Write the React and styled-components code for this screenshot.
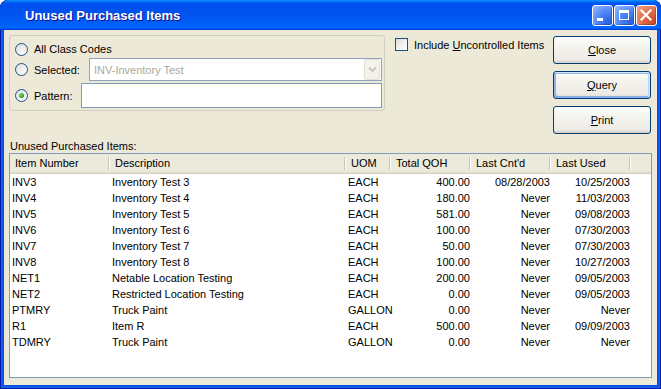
import React from "react";
import styled, { createGlobalStyle, css } from "styled-components";

const GlobalStyle = createGlobalStyle`
  html, body {
    margin: 0;
    padding: 0;
    background: #ffffff;
  }
  body {
    font-family: "Liberation Sans", Arial, sans-serif;
    font-size: 11px;
    color: #000000;
  }
`;

const Window = styled.div`
  width: 661px;
  height: 389px;
  box-sizing: border-box;
  display: flex;
  flex-direction: column;
  padding: 0 4px 4px;
  background: #0a53e4;
  border-radius: 8px 8px 0 0;
  overflow: hidden;
  box-shadow: inset 1px 0 #0019a8, inset -1px 0 #0019a8, inset 0 -1px #0019a8,
    inset 2px 0 #1664f0, inset -2px 0 #1664f0, inset 0 -2px #1664f0;
`;

const TitleBar = styled.div`
  height: 30px;
  margin: 0 -4px;
  padding: 0 4px 0 25px;
  display: flex;
  align-items: center;
  background: linear-gradient(
    180deg,
    #0997ff 0%,
    #0053ee 10%,
    #0050ee 40%,
    #0062fa 86%,
    #0066ff 92%,
    #005bff 95%,
    #003dd7 97%,
    #003dd7 100%
  );
  border-radius: 8px 8px 0 0;
`;

const Title = styled.div`
  flex: 1;
  color: #ffffff;
  font-size: 13px;
  font-weight: bold;
  text-shadow: 1px 1px #0f1089;
`;

const CaptionButtons = styled.div`
  display: flex;
  gap: 1px;
  margin-top: 1px;
`;

const CaptionButton = styled.div`
  width: 21px;
  height: 21px;
  box-sizing: border-box;
  border: 1px solid #ffffff;
  border-radius: 3px;
  display: flex;
  align-items: center;
  justify-content: center;
  background: ${(p) =>
    p.close
      ? "radial-gradient(circle at 85% 85%, #cc4628 0%, #e06a46 45%, #f0a48a 100%)"
      : "radial-gradient(circle at 85% 85%, #2a5fdf 0%, #4b82f7 45%, #9bbcff 100%)"};
  box-shadow: inset -1px -1px rgba(0, 0, 60, 0.25);
`;

const Body = styled.div`
  flex: 1;
  display: flex;
  flex-direction: column;
  padding: 5px 5px 7px 5px;
  background: #ece9d8;
`;

const TopRow = styled.div`
  height: 99px;
  display: flex;
  align-items: flex-start;
`;

const GroupBox = styled.div`
  width: 376px;
  height: 76px;
  box-sizing: border-box;
  border: 1px solid #d0d0bf;
  border-radius: 3px;
  padding: 4px 2px 2px 5px;
  display: flex;
  flex-direction: column;
`;

const OptionRow = styled.div`
  height: ${(p) => p.h}px;
  margin-top: ${(p) => p.mt || 0}px;
  display: flex;
  align-items: center;
  justify-content: space-between;
`;

const OptionLabel = styled.label`
  display: flex;
  align-items: center;
  gap: 6px;
`;

const Radio = styled.span`
  width: 13px;
  height: 13px;
  box-sizing: border-box;
  flex: none;
  border: 1px solid #1c5180;
  border-radius: 50%;
  background: linear-gradient(135deg, #dcdcd7 0%, #f3f3ef 60%, #ffffff 100%);
  display: inline-flex;
  align-items: center;
  justify-content: center;
  ${(p) =>
    p.checked &&
    css`
      &::after {
        content: "";
        width: 5px;
        height: 5px;
        border-radius: 50%;
        background: radial-gradient(circle at 35% 35%, #6fe26b 0%, #2fa82a 55%, #1d7a1a 100%);
      }
    `}
`;

const Combo = styled.div`
  width: 293px;
  height: 23px;
  box-sizing: border-box;
  border: 1px solid #8ea3bc;
  background: #ffffff;
  display: flex;
  align-items: stretch;
`;

const ComboText = styled.div`
  flex: 1;
  display: flex;
  align-items: center;
  padding-left: 4px;
  color: #aca899;
`;

const ComboButton = styled.div`
  width: 16px;
  margin-right: 1px;
  box-sizing: border-box;
  border: 1px solid #e3e1d6;
  border-radius: 2px;
  background: #f3f2ec;
  display: flex;
  align-items: center;
  justify-content: center;
`;

const TextInput = styled.div`
  width: 301px;
  height: 25px;
  box-sizing: border-box;
  border: 1px solid #7f9db9;
  background: #ffffff;
`;

const CheckArea = styled.div`
  flex: 1;
  padding: 3px 0 0 10px;
`;

const CheckLabel = styled.label`
  display: flex;
  align-items: center;
  gap: 6px;
`;

const CheckBox = styled.span`
  width: 13px;
  height: 13px;
  box-sizing: border-box;
  border: 1px solid #1c5180;
  background: linear-gradient(135deg, #dcdcd7 0%, #f3f3ef 60%, #ffffff 100%);
`;

const ButtonColumn = styled.div`
  margin: 1px 1px 0 0;
  display: flex;
  flex-direction: column;
  gap: 7px;
`;

const PushButton = styled.div`
  width: 98px;
  height: 28px;
  box-sizing: border-box;
  border: 1px solid #003c74;
  border-radius: 3px;
  background: linear-gradient(180deg, #ffffff 0%, #f5f4ef 30%, #ecebe6 86%, #d6d0c5 100%);
  display: flex;
  align-items: center;
  justify-content: center;
  ${(p) =>
    p.isDefault &&
    css`
      box-shadow: inset -1px 1px #cee7ff, inset 1px 2px #98b8ea, inset -2px 2px #bcd4f6,
        inset 1px -1px #89ade4, inset 2px -2px #89ade4;
    `}
`;

const ListCaption = styled.div`
  margin-top: 6px;
  line-height: 13px;
  padding-left: 1px;
`;

const ListView = styled.div`
  flex: 1;
  border: 1px solid #7f9db9;
  background: #ffffff;
  overflow: hidden;
`;

const COLUMNS = "100px 236px 45px 80px 80px 80px 1fr";

const HeaderRow = styled.div`
  display: grid;
  grid-template-columns: ${COLUMNS};
  height: 20px;
  background: #ebeadb;
  box-shadow: inset 0 -1px #d6d2c2, inset 0 -2px #e2ded0, inset 0 -3px #e8e6d8;
`;

const HeaderCell = styled.div`
  display: flex;
  align-items: center;
  padding: 0 0 2px 5px;
  white-space: nowrap;
  overflow: hidden;
  background-image: ${(p) =>
    p.last
      ? "none"
      : "linear-gradient(#c7c5b2, #c7c5b2), linear-gradient(#ffffff, #ffffff)"};
  background-repeat: no-repeat;
  background-size: 1px 13px, 1px 13px;
  background-position: calc(100% - 1px) 3px, 100% 3px;
`;

const DataRow = styled.div`
  display: grid;
  grid-template-columns: ${COLUMNS};
  height: 16px;
  line-height: 16px;
`;

const DataCell = styled.div`
  padding: ${(p) => (p.right ? "0 1px 0 0" : "0 0 0 2px")};
  text-align: ${(p) => (p.right ? "right" : "left")};
  white-space: nowrap;
  overflow: visible;
`;

const headers = ["Item Number", "Description", "UOM", "Total QOH", "Last Cnt'd", "Last Used"];

const rows = [
  ["INV3", "Inventory Test 3", "EACH", "400.00", "08/28/2003", "10/25/2003"],
  ["INV4", "Inventory Test 4", "EACH", "180.00", "Never", "11/03/2003"],
  ["INV5", "Inventory Test 5", "EACH", "581.00", "Never", "09/08/2003"],
  ["INV6", "Inventory Test 6", "EACH", "100.00", "Never", "07/30/2003"],
  ["INV7", "Inventory Test 7", "EACH", "50.00", "Never", "07/30/2003"],
  ["INV8", "Inventory Test 8", "EACH", "100.00", "Never", "10/27/2003"],
  ["NET1", "Netable Location Testing", "EACH", "200.00", "Never", "09/05/2003"],
  ["NET2", "Restricted Location Testing", "EACH", "0.00", "Never", "09/05/2003"],
  ["PTMRY", "Truck Paint", "GALLON", "0.00", "Never", "Never"],
  ["R1", "Item R", "EACH", "500.00", "Never", "09/09/2003"],
  ["TDMRY", "Truck Paint", "GALLON", "0.00", "Never", "Never"],
];

const MinimizeIcon = () => (
  <svg width="19" height="19" viewBox="0 0 19 19">
    <rect x="4" y="12" width="6" height="3" fill="#ffffff" />
  </svg>
);

const MaximizeIcon = () => (
  <svg width="19" height="19" viewBox="0 0 19 19">
    <rect x="4.5" y="4.5" width="9" height="9" fill="none" stroke="#ffffff" strokeWidth="1" />
    <rect x="4" y="4" width="10" height="3" fill="#ffffff" />
  </svg>
);

const CloseIcon = () => (
  <svg width="19" height="19" viewBox="0 0 19 19">
    <path d="M4.5 4.5 L13.5 13.5 M13.5 4.5 L4.5 13.5" stroke="#ffffff" strokeWidth="2.2" strokeLinecap="square" />
  </svg>
);

const Chevron = () => (
  <svg width="9" height="7" viewBox="0 0 9 7">
    <polyline points="1,1.5 4.5,5 8,1.5" fill="none" stroke="#c9c7ba" strokeWidth="2" />
  </svg>
);

export default function App() {
  return (
    <>
      <GlobalStyle />
      <Window>
        <TitleBar>
          <Title>Unused Purchased Items</Title>
          <CaptionButtons>
            <CaptionButton>
              <MinimizeIcon />
            </CaptionButton>
            <CaptionButton>
              <MaximizeIcon />
            </CaptionButton>
            <CaptionButton close>
              <CloseIcon />
            </CaptionButton>
          </CaptionButtons>
        </TitleBar>
        <Body>
          <TopRow>
            <GroupBox>
              <OptionRow h={19}>
                <OptionLabel>
                  <Radio />
                  All Class Codes
                </OptionLabel>
              </OptionRow>
              <OptionRow h={23}>
                <OptionLabel>
                  <Radio />
                  Selected:
                </OptionLabel>
                <Combo>
                  <ComboText>INV-Inventory Test</ComboText>
                  <ComboButton>
                    <Chevron />
                  </ComboButton>
                </Combo>
              </OptionRow>
              <OptionRow h={25} mt={2}>
                <OptionLabel>
                  <Radio checked />
                  Pattern:
                </OptionLabel>
                <TextInput />
              </OptionRow>
            </GroupBox>
            <CheckArea>
              <CheckLabel>
                <CheckBox />
                <span>
                  Include <u>U</u>ncontrolled Items
                </span>
              </CheckLabel>
            </CheckArea>
            <ButtonColumn>
              <PushButton>
                <span>
                  <u>C</u>lose
                </span>
              </PushButton>
              <PushButton isDefault>
                <span>
                  <u>Q</u>uery
                </span>
              </PushButton>
              <PushButton>
                <span>
                  <u>P</u>rint
                </span>
              </PushButton>
            </ButtonColumn>
          </TopRow>
          <ListCaption>Unused Purchased Items:</ListCaption>
          <ListView>
            <HeaderRow>
              {headers.map((h) => (
                <HeaderCell key={h}>{h}</HeaderCell>
              ))}
              <HeaderCell last />
            </HeaderRow>
            {rows.map((r) => (
              <DataRow key={r[0]}>
                <DataCell>{r[0]}</DataCell>
                <DataCell>{r[1]}</DataCell>
                <DataCell>{r[2]}</DataCell>
                <DataCell right>{r[3]}</DataCell>
                <DataCell right>{r[4]}</DataCell>
                <DataCell right>{r[5]}</DataCell>
              </DataRow>
            ))}
          </ListView>
        </Body>
      </Window>
    </>
  );
}
